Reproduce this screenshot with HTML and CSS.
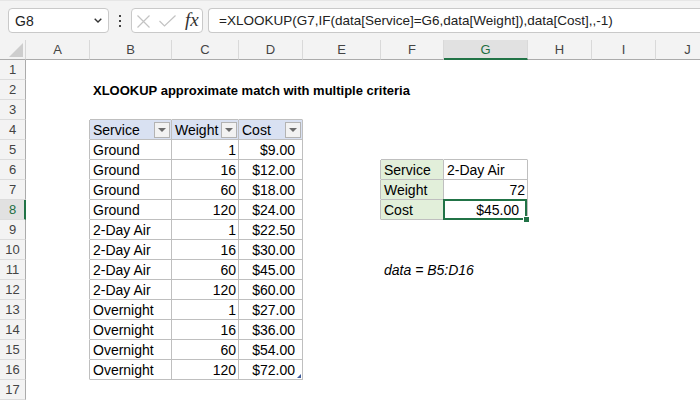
FILE: index.html
```html
<!DOCTYPE html>
<html>
<head>
<meta charset="utf-8">
<link rel="stylesheet" href="styles.css">
</head>
<body>
<div class="topbar">
  <div class="namebox"><span class="nb-text">G8</span>
    <svg class="chev" width="8" height="5" viewBox="0 0 8 5"><path d="M0.7 0.7 L4 4 L7.3 0.7" fill="none" stroke="#333" stroke-width="1.4"/></svg>
  </div>
  <div class="dots"><i></i><i></i><i></i></div>
  <div class="fxbox">
    <svg class="ico-x" width="13" height="13" viewBox="0 0 13 13"><path d="M0.5 0.5 L12.5 12.5 M12.5 0.5 L0.5 12.5" stroke="#c3c3c3" stroke-width="1.2" fill="none"/></svg>
    <svg class="ico-ok" width="17" height="12" viewBox="0 0 17 12"><path d="M0.5 6 L5.5 11 L16.5 0.5" stroke="#c3c3c3" stroke-width="1.2" fill="none"/></svg>
    <span class="fx">fx</span>
  </div>
  <div class="formula">=XLOOKUP(G7,IF(data[Service]=G6,data[Weight]),data[Cost],,-1)</div>
</div>

<div class="sheet">
  <div class="row hdr">
    <div class="corner"><svg width="14" height="14" viewBox="0 0 14 14"><path d="M14 0 L14 14 L0 14 Z" fill="#cdcdcd"/></svg></div>
    <div class="ch">A</div><div class="ch">B</div><div class="ch">C</div><div class="ch">D</div><div class="ch">E</div><div class="ch">F</div><div class="ch on">G</div><div class="ch">H</div><div class="ch">I</div><div class="ch">J</div>
  </div>

  <div class="row"><div class="rh">1</div><div class="c"></div><div class="c"></div><div class="c"></div><div class="c"></div><div class="c"></div><div class="c"></div><div class="c"></div><div class="c"></div><div class="c"></div><div class="c"></div></div>

  <div class="row"><div class="rh">2</div><div class="c"></div><div class="c title">XLOOKUP approximate match with multiple criteria</div><div class="c"></div><div class="c"></div><div class="c"></div><div class="c"></div><div class="c"></div><div class="c"></div><div class="c"></div><div class="c"></div></div>

  <div class="row"><div class="rh">3</div><div class="c"></div><div class="c bb"></div><div class="c bb"></div><div class="c bb"></div><div class="c"></div><div class="c"></div><div class="c"></div><div class="c"></div><div class="c"></div><div class="c"></div></div>

  <div class="row"><div class="rh">4</div><div class="c br"></div>
    <div class="c bx th"><span>Service</span><span class="flt"><svg width="8" height="4" viewBox="0 0 8 4"><path d="M0 0 H8 L4 4 Z" fill="#6b6b6b"/></svg></span></div>
    <div class="c bx th"><span>Weight</span><span class="flt"><svg width="8" height="4" viewBox="0 0 8 4"><path d="M0 0 H8 L4 4 Z" fill="#6b6b6b"/></svg></span></div>
    <div class="c bx th"><span>Cost</span><span class="flt"><svg width="8" height="4" viewBox="0 0 8 4"><path d="M0 0 H8 L4 4 Z" fill="#6b6b6b"/></svg></span></div>
    <div class="c"></div><div class="c"></div><div class="c"></div><div class="c"></div><div class="c"></div><div class="c"></div></div>

  <div class="row"><div class="rh">5</div><div class="c br"></div><div class="c bx">Ground</div><div class="c bx num">1</div><div class="c bx cur">$9.00</div><div class="c"></div><div class="c bb"></div><div class="c bb"></div><div class="c"></div><div class="c"></div><div class="c"></div></div>

  <div class="row"><div class="rh">6</div><div class="c br"></div><div class="c bx">Ground</div><div class="c bx num">16</div><div class="c bx cur">$12.00</div><div class="c br"></div><div class="c bx lbl">Service</div><div class="c bx">2-Day Air</div><div class="c"></div><div class="c"></div><div class="c"></div></div>

  <div class="row"><div class="rh">7</div><div class="c br"></div><div class="c bx">Ground</div><div class="c bx num">60</div><div class="c bx cur">$18.00</div><div class="c br"></div><div class="c bx lbl">Weight</div><div class="c bx num">72</div><div class="c"></div><div class="c"></div><div class="c"></div></div>

  <div class="row"><div class="rh on">8</div><div class="c br"></div><div class="c bx">Ground</div><div class="c bx num">120</div><div class="c bx cur">$24.00</div><div class="c br"></div><div class="c bx lbl">Cost</div><div class="c bx cur active">$45.00<span class="selbox"></span><span class="handle"></span></div><div class="c"></div><div class="c"></div><div class="c"></div></div>

  <div class="row"><div class="rh">9</div><div class="c br"></div><div class="c bx">2-Day Air</div><div class="c bx num">1</div><div class="c bx cur">$22.50</div><div class="c"></div><div class="c"></div><div class="c"></div><div class="c"></div><div class="c"></div><div class="c"></div></div>

  <div class="row"><div class="rh">10</div><div class="c br"></div><div class="c bx">2-Day Air</div><div class="c bx num">16</div><div class="c bx cur">$30.00</div><div class="c"></div><div class="c"></div><div class="c"></div><div class="c"></div><div class="c"></div><div class="c"></div></div>

  <div class="row"><div class="rh">11</div><div class="c br"></div><div class="c bx">2-Day Air</div><div class="c bx num">60</div><div class="c bx cur">$45.00</div><div class="c"></div><div class="c note">data = B5:D16</div><div class="c"></div><div class="c"></div><div class="c"></div><div class="c"></div></div>

  <div class="row"><div class="rh">12</div><div class="c br"></div><div class="c bx">2-Day Air</div><div class="c bx num">120</div><div class="c bx cur">$60.00</div><div class="c"></div><div class="c"></div><div class="c"></div><div class="c"></div><div class="c"></div><div class="c"></div></div>

  <div class="row"><div class="rh">13</div><div class="c br"></div><div class="c bx">Overnight</div><div class="c bx num">1</div><div class="c bx cur">$27.00</div><div class="c"></div><div class="c"></div><div class="c"></div><div class="c"></div><div class="c"></div><div class="c"></div></div>

  <div class="row"><div class="rh">14</div><div class="c br"></div><div class="c bx">Overnight</div><div class="c bx num">16</div><div class="c bx cur">$36.00</div><div class="c"></div><div class="c"></div><div class="c"></div><div class="c"></div><div class="c"></div><div class="c"></div></div>

  <div class="row"><div class="rh">15</div><div class="c br"></div><div class="c bx">Overnight</div><div class="c bx num">60</div><div class="c bx cur">$54.00</div><div class="c"></div><div class="c"></div><div class="c"></div><div class="c"></div><div class="c"></div><div class="c"></div></div>

  <div class="row"><div class="rh">16</div><div class="c br"></div><div class="c bx">Overnight</div><div class="c bx num">120</div><div class="c bx cur last">$72.00<span class="resize"></span></div><div class="c"></div><div class="c"></div><div class="c"></div><div class="c"></div><div class="c"></div><div class="c"></div></div>

  <div class="row"><div class="rh">17</div><div class="c"></div><div class="c"></div><div class="c"></div><div class="c"></div><div class="c"></div><div class="c"></div><div class="c"></div><div class="c"></div><div class="c"></div><div class="c"></div></div>
</div>
</body>
</html>
```

FILE: styles.css
```css
html, body {
  margin: 0;
  padding: 0;
}
body {
  width: 700px;
  height: 400px;
  overflow: hidden;
  background: #ffffff;
  font-family: "Liberation Sans", Arial, sans-serif;
  color: #000;
}

/* ---------- formula bar ---------- */
.topbar {
  height: 40px;
  box-sizing: border-box;
  padding-top: 7px;
  background: #f3f3f3;
  display: flex;
  align-items: flex-start;
  border-top: 1px solid #e6e6e6;
}
.namebox {
  margin-left: 8px;
  width: 101px;
  height: 25px;
  box-sizing: border-box;
  border: 1px solid #c9c9c9;
  border-radius: 4px;
  background: #fff;
  display: flex;
  align-items: center;
  justify-content: space-between;
  padding: 0 6px 0 6px;
  font-size: 14px;
  color: #222;
}
.chev { display: block; }
.dots {
  margin-left: 10px;
  width: 2px;
  height: 25px;
  display: flex;
  flex-direction: column;
  justify-content: center;
  gap: 3px;
}
.dots i {
  display: block;
  width: 2px;
  height: 2px;
  background: #444;
}
.fxbox {
  margin-left: 10px;
  width: 72px;
  height: 25px;
  box-sizing: border-box;
  border: 1px solid #c9c9c9;
  border-radius: 4px;
  background: #fff;
  display: flex;
  align-items: center;
  padding-left: 5px;
}
.ico-x { display: block; margin-top: 1px; }
.ico-ok { display: block; margin-left: 9px; margin-top: 1px; }
.fx {
  margin-left: 9px;
  font-family: "Liberation Serif", "Times New Roman", serif;
  font-style: italic;
  font-size: 19px;
  color: #333;
  line-height: 1;
  margin-top: -2px;
}
.formula {
  margin-left: 5px;
  flex: 1;
  height: 25px;
  box-sizing: border-box;
  border: 1px solid #c9c9c9;
  border-right: none;
  border-radius: 4px 0 0 4px;
  background: #fff;
  padding-left: 10px;
  font-size: 13.5px;
  line-height: 23px;
  color: #222;
  white-space: nowrap;
  overflow: hidden;
}

/* ---------- sheet grid ---------- */
.row {
  display: grid;
  grid-template-columns: 26px 64px 82px 67px 64px 78px 63px 84px 64px 64px 64px;
  height: 20px;
}
.hdr {
  background: #f3f3f3;
}
.corner {
  box-sizing: border-box;
  height: 20px;
  border-right: 1px solid #d6d6d6;
  border-bottom: 1px solid #ababab;
  display: flex;
  align-items: flex-end;
  justify-content: flex-end;
  padding: 0 2px 2px 0;
}
.corner svg { display: block; }
.ch {
  box-sizing: border-box;
  height: 20px;
  border-right: 1px solid #d9d9d9;
  border-bottom: 1px solid #ababab;
  text-align: center;
  font-size: 13px;
  line-height: 20px;
  color: #444;
}
.ch.on {
  background: #e1e1e1;
  color: #1e6e42;
  border-bottom: 2px solid #217346;
  line-height: 19px;
}
.rh {
  box-sizing: border-box;
  height: 20px;
  background: #f3f3f3;
  border-right: 1px solid #ababab;
  border-bottom: 1px solid #dcdcdc;
  text-align: center;
  font-size: 13px;
  line-height: 20px;
  color: #444;
}
.rh.on {
  background: #e1e1e1;
  color: #1e6e42;
  border-right: 2px solid #217346;
  padding-left: 1px;
}

.c {
  box-sizing: border-box;
  height: 20px;
  border-right: 1px solid transparent;
  border-bottom: 1px solid transparent;
  padding: 1px 3px 0 3px;
  font-size: 14px;
  line-height: 19px;
  white-space: nowrap;
  min-width: 0;
}
.bb { border-bottom-color: #bfbfbf; }
.br { border-right-color: #bfbfbf; }
.bx { border-right-color: #bfbfbf; border-bottom-color: #bfbfbf; }

.title {
  font-weight: bold;
  font-size: 13px;
  overflow: visible;
}
.th {
  background: #d9e1f2;
  display: flex;
  align-items: center;
  justify-content: space-between;
  padding: 0 1px 0 3px;
}
.th span:first-child { padding-top: 1px; }
.flt {
  width: 16px;
  height: 16px;
  box-sizing: border-box;
  border: 1px solid #b3b3b3;
  background: #f2f2f2;
  display: flex;
  align-items: center;
  justify-content: center;
}
.flt svg { display: block; }
.num { text-align: right; padding-right: 2px; }
.cur { text-align: right; padding-right: 7px; }
.lbl { background: #e2efda; }
.note { font-style: italic; overflow: visible; }

.active { position: relative; padding-right: 8px; }
.selbox {
  position: absolute;
  left: -1px;
  top: -1px;
  right: 0;
  bottom: -1px;
  border: 2px solid #217346;
}
.handle {
  position: absolute;
  right: -2px;
  bottom: -3px;
  width: 5px;
  height: 5px;
  background: #217346;
  border-left: 1px solid #fff;
  border-top: 1px solid #fff;
}
.last { position: relative; }
.resize {
  position: absolute;
  right: 1px;
  bottom: 1px;
  width: 0;
  height: 0;
  border-left: 4px solid transparent;
  border-bottom: 4px solid #3c5a9a;
}
```
